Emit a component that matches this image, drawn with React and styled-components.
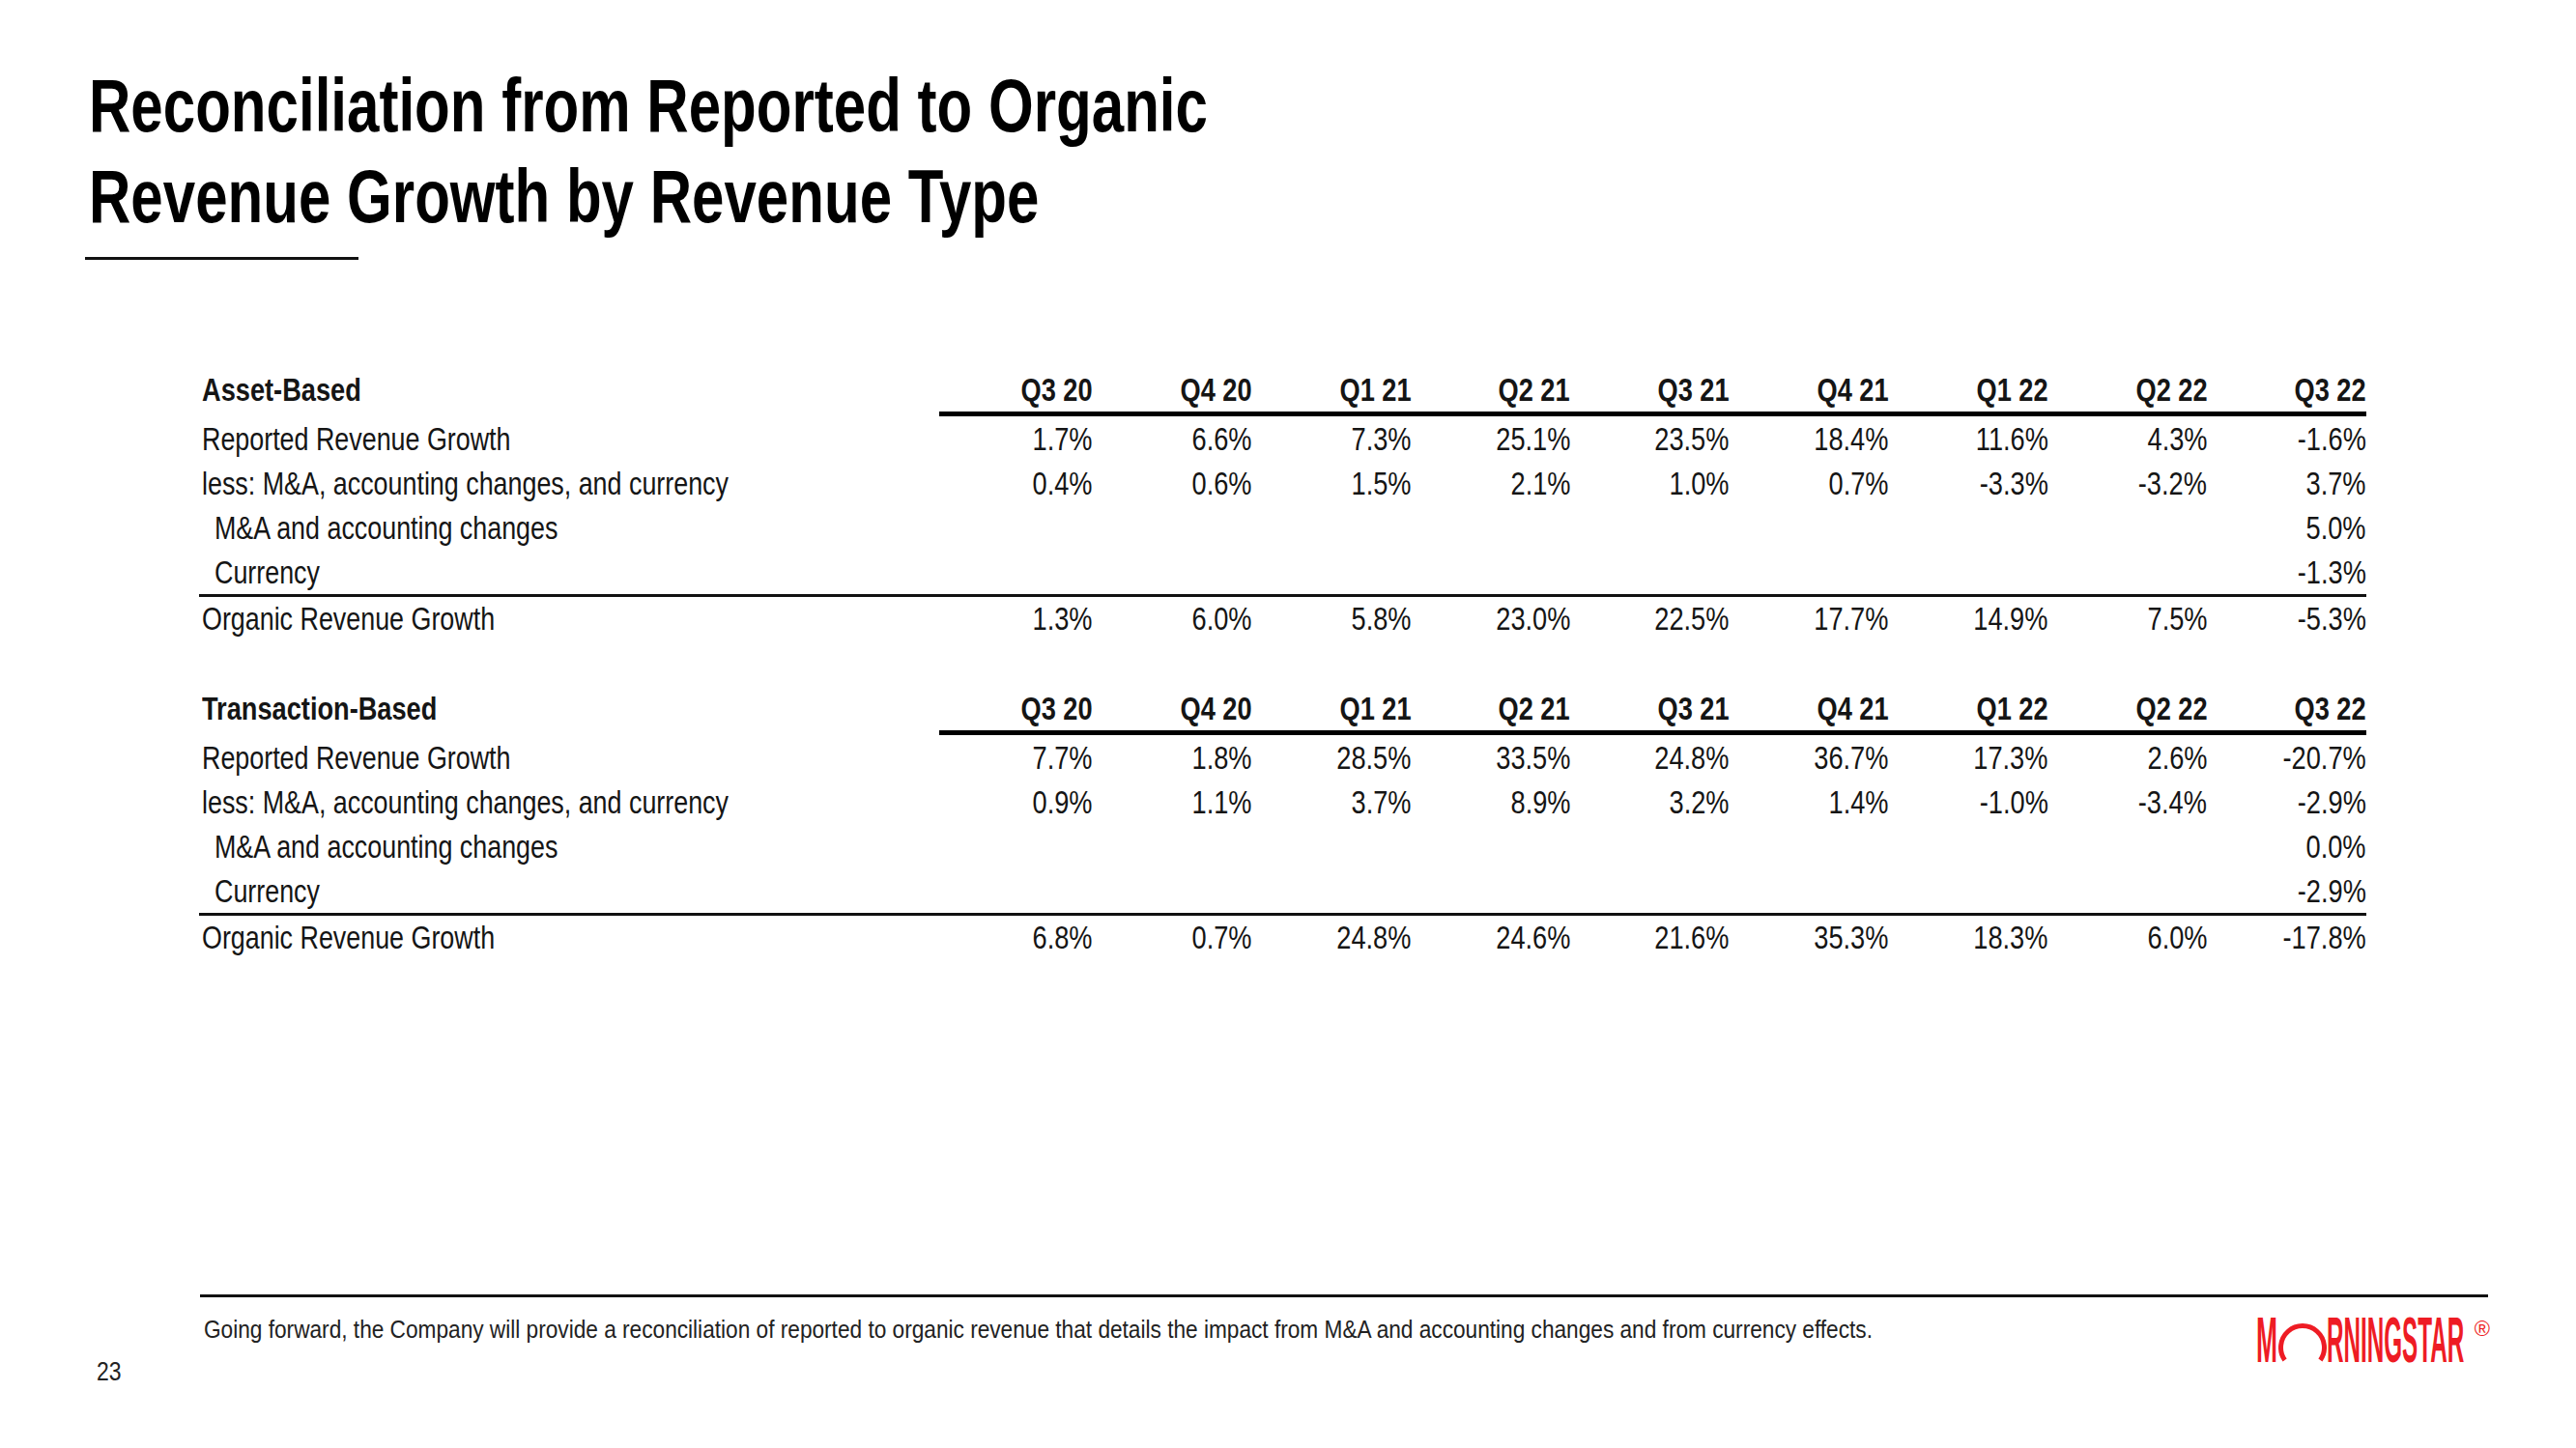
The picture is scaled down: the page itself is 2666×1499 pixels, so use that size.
import React from "react";
import styled, { createGlobalStyle } from "styled-components";

const GlobalStyle = createGlobalStyle`
  html, body {
    margin: 0;
    padding: 0;
    background: #ffffff;
  }
  body {
    font-family: "Liberation Sans", Arial, sans-serif;
    color: #111111;
  }
`;

const Page = styled.div`
  display: flex;
  flex-direction: column;
  min-height: 100vh;
  width: 2666px;
  box-sizing: border-box;
`;

/* condensed text: the deck's typeface is a narrow grotesque */
const Squeeze = styled.span`
  display: inline-block;
  white-space: nowrap;
  transform: scaleX(${(p) => p.$x ?? 0.8});
  transform-origin: ${(p) => p.$origin ?? "left"} center;
`;

const Header = styled.header`
  padding: 62px 0 0 92px;
`;

const Title = styled.h1`
  margin: 0;
  font-weight: 700;
  font-size: 78px;
  line-height: 94px;
  color: #000000;
`;

const TitleLine = styled(Squeeze)`
  display: block;
  width: max-content;
`;

const TitleRule = styled.div`
  margin: 16px 0 0 -4px;
  width: 283px;
  height: 3px;
  background: #111111;
`;

const Tables = styled.main`
  display: flex;
  flex-direction: column;
  gap: 48px;
  margin: 111px 0 0 206px;
  width: 2243px;
`;

const Section = styled.section`
  display: grid;
  grid-template-columns: 760px repeat(9, 1fr);
  color: #151515;
  font-size: 34px;
`;

const Label = styled.div`
  grid-column: 1;
  line-height: ${(p) => (p.$total ? "44px" : "46px")};
  padding-left: ${(p) => (p.$indent ? "16px" : "3px")};
  font-weight: ${(p) => (p.$bold ? 700 : 400)};
  white-space: nowrap;
`;

const Cell = styled.div`
  text-align: right;
  line-height: ${(p) => (p.$total ? "44px" : "46px")};
  font-weight: ${(p) => (p.$bold ? 700 : 400)};
  white-space: nowrap;
`;

const HeadRule = styled.div`
  grid-column: 2 / -1;
  margin-left: 6px;
  height: 5px;
  background: #000000;
`;

const TotalRule = styled.div`
  grid-column: 1 / -1;
  height: 3px;
  background: #111111;
`;

const Footer = styled.footer`
  margin-top: auto;
  display: flex;
  align-items: flex-end;
  padding-bottom: 64px;
`;

const PageNumber = styled.div`
  width: 207px;
  box-sizing: border-box;
  padding-left: 100px;
  font-size: 28px;
  line-height: 30px;
  color: #222222;
`;

const FooterBody = styled.div`
  width: 2368px;
  border-top: 3px solid #111111;
  padding: 18px 0 22px 0;
  display: flex;
  justify-content: space-between;
  align-items: flex-start;
`;

const Note = styled.p`
  margin: 0 0 0 4px;
  font-size: 25px;
  line-height: 30px;
  color: #222222;
`;

const LogoMark = styled.div`
  display: flex;
  align-items: flex-start;
  height: 52px;
  margin-right: -2px;
  color: #ee1c24;
`;

const LogoWord = styled.span`
  display: block;
  width: ${(p) => p.$w}px;
  font-size: 66px;
  font-weight: 700;
  line-height: 52px;
`;

const LogoArc = styled.svg`
  display: block;
  flex: none;
  margin-left: 1px;
`;

const Registered = styled.span`
  display: block;
  margin: 4px 0 0 9px;
  font-size: 22px;
  line-height: 22px;
`;

const quarters = ["Q3 20", "Q4 20", "Q1 21", "Q2 21", "Q3 21", "Q4 21", "Q1 22", "Q2 22", "Q3 22"];

const blank = (last) => ["", "", "", "", "", "", "", "", last];

const sections = [
  {
    title: "Asset-Based",
    rows: [
      { label: "Reported Revenue Growth", values: ["1.7%", "6.6%", "7.3%", "25.1%", "23.5%", "18.4%", "11.6%", "4.3%", "-1.6%"] },
      { label: "less: M&A, accounting changes, and currency", values: ["0.4%", "0.6%", "1.5%", "2.1%", "1.0%", "0.7%", "-3.3%", "-3.2%", "3.7%"] },
      { label: "M&A and accounting changes", indent: true, values: blank("5.0%") },
      { label: "Currency", indent: true, values: blank("-1.3%") },
    ],
    total: { label: "Organic Revenue Growth", values: ["1.3%", "6.0%", "5.8%", "23.0%", "22.5%", "17.7%", "14.9%", "7.5%", "-5.3%"] },
  },
  {
    title: "Transaction-Based",
    rows: [
      { label: "Reported Revenue Growth", values: ["7.7%", "1.8%", "28.5%", "33.5%", "24.8%", "36.7%", "17.3%", "2.6%", "-20.7%"] },
      { label: "less: M&A, accounting changes, and currency", values: ["0.9%", "1.1%", "3.7%", "8.9%", "3.2%", "1.4%", "-1.0%", "-3.4%", "-2.9%"] },
      { label: "M&A and accounting changes", indent: true, values: blank("0.0%") },
      { label: "Currency", indent: true, values: blank("-2.9%") },
    ],
    total: { label: "Organic Revenue Growth", values: ["6.8%", "0.7%", "24.8%", "24.6%", "21.6%", "35.3%", "18.3%", "6.0%", "-17.8%"] },
  },
];

function Logo() {
  return (
    <LogoMark aria-label="Morningstar">
      <LogoWord $w={22}>
        <Squeeze $x={0.4}>M</Squeeze>
      </LogoWord>
      <LogoArc width="50" height="52" viewBox="0 0 50 52">
        <path d="M6.6 47 A22.5 22.5 0 1 1 43.4 47" fill="none" stroke="currentColor" strokeWidth="5" />
      </LogoArc>
      <LogoWord $w={144}>
        <Squeeze $x={0.367}>RNINGSTAR</Squeeze>
      </LogoWord>
      <Registered>®</Registered>
    </LogoMark>
  );
}

function Table({ section }) {
  return (
    <Section>
      <Label $bold>
        <Squeeze>{section.title}</Squeeze>
      </Label>
      {quarters.map((q) => (
        <Cell key={q} $bold>
          <Squeeze $origin="right">{q}</Squeeze>
        </Cell>
      ))}
      <HeadRule />
      {section.rows.map((row) => (
        <React.Fragment key={row.label}>
          <Label $indent={row.indent}>
            <Squeeze $x={0.79}>{row.label}</Squeeze>
          </Label>
          {row.values.map((v, i) => (
            <Cell key={i}>
              <Squeeze $origin="right">{v}</Squeeze>
            </Cell>
          ))}
        </React.Fragment>
      ))}
      <TotalRule />
      <Label $total>
        <Squeeze $x={0.79}>{section.total.label}</Squeeze>
      </Label>
      {section.total.values.map((v, i) => (
        <Cell key={i} $total>
          <Squeeze $origin="right">{v}</Squeeze>
        </Cell>
      ))}
    </Section>
  );
}

export default function App() {
  return (
    <>
      <GlobalStyle />
      <Page>
        <Header>
          <Title>
            <TitleLine $x={0.77}>Reconciliation from Reported to Organic</TitleLine>
            <TitleLine $x={0.77}>Revenue Growth by Revenue Type</TitleLine>
          </Title>
          <TitleRule />
        </Header>
        <Tables>
          {sections.map((s) => (
            <Table key={s.title} section={s} />
          ))}
        </Tables>
        <Footer>
          <PageNumber>
            <Squeeze $x={0.82}>23</Squeeze>
          </PageNumber>
          <FooterBody>
            <Note>
              <Squeeze $x={0.906}>
                Going forward, the Company will provide a reconciliation of reported to organic revenue that details the
                impact from M&amp;A and accounting changes and from currency effects.
              </Squeeze>
            </Note>
            <Logo />
          </FooterBody>
        </Footer>
      </Page>
    </>
  );
}
